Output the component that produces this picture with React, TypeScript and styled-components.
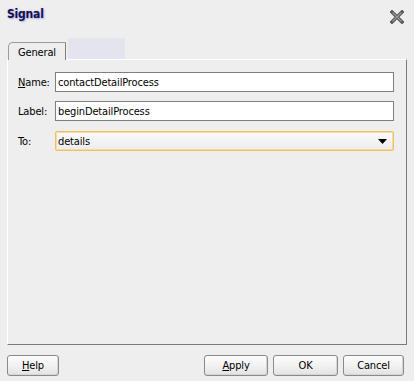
import * as React from "react";
import styled, { createGlobalStyle } from "styled-components";

const Global = createGlobalStyle`
  html, body { margin: 0; padding: 0; background: #eeeeee; }
  body {
    font-family: "DejaVu Sans Condensed", "DejaVu Sans", sans-serif;
    font-size: 11px;
    letter-spacing: -0.15px;
    color: #000;
  }
`;

const Dialog = styled.div`
  width: 414px;
  height: 381px;
  background: #eeeeee;
  display: flex;
  flex-direction: column;
`;

const Header = styled.div`
  height: 38px;
  display: flex;
  align-items: flex-start;
  justify-content: space-between;
  padding: 7px 10px 0 7px;
  box-sizing: border-box;
`;

const Title = styled.div`
  font-weight: bold;
  font-size: 12px;
  letter-spacing: -0.2px;
  color: #10104a;
  text-shadow: 1px 1px 2px #b8b0e8, 0 0 2px #c8c0f0;
`;

const CloseIcon = styled.svg`
  margin-top: 3px;
`;

const TabStrip = styled.div`
  display: flex;
  align-items: flex-end;
  height: 21px;
  padding-left: 8px;
`;

const Tab = styled.div`
  width: 58px;
  height: 18px;
  box-sizing: border-box;
  border-top: 1px solid #9a9a9a;
  border-left: 1px solid #9a9a9a;
  border-right: 1px solid #808080;
  border-top-left-radius: 5px;
  background: #eeeeee;
  display: flex;
  align-items: center;
  justify-content: center;
  padding-top: 1px;
  position: relative;
  top: 1px;
  z-index: 1;
`;

const TabFiller = styled.div`
  width: 57px;
  height: 21px;
  margin-left: 2px;
  background: #e4e4ee;
`;

const Panel = styled.div`
  margin: 0 7px;
  height: 286px;
  box-sizing: border-box;
  border-top: 1px solid #ffffff;
  border-left: 1px solid #ffffff;
  border-right: 1px solid #7a7a7a;
  border-bottom: 1px solid #7a7a7a;
  padding: 12px 12px 0 10px;
  display: flex;
  flex-direction: column;
  gap: 9px;
`;

const Row = styled.div`
  display: flex;
  align-items: center;
  height: 20px;
  &:nth-child(3) { margin-top: 1px; }
`;

const Label = styled.label`
  width: 37px;
  flex: none;
  u { text-decoration: underline; }
`;

const Field = styled.div`
  flex: 1;
  height: 20px;
  box-sizing: border-box;
  border: 1px solid #7f7f7f;
  background: #ffffff;
  display: flex;
  align-items: center;
  padding-left: 2px;
`;

const Select = styled(Field)`
  border: 1px solid #f0c060;
  box-shadow: inset 0 0 0 1px #f8dc9c;
  background: linear-gradient(#fbfbfb, #ecebef);
  border-radius: 2px;
  justify-content: space-between;
  padding-right: 6px;
`;

const Footer = styled.div`
  display: flex;
  align-items: center;
  padding: 10px 10px 0 7px;
  gap: 5px;
`;

const Spacer = styled.div`
  flex: 1;
`;

const Button = styled.button<{ $w: number }>`
  width: ${(p) => p.$w}px;
  height: 21px;
  box-sizing: border-box;
  border: 1px solid #8a8a8a;
  border-radius: 3px;
  background: linear-gradient(#fcfcfc, #f2f2f2 50%, #e2e2e2);
  box-shadow: inset -1px -1px 0 #d6d6d6;
  font-family: inherit;
  font-size: 11px;
  letter-spacing: inherit;
  color: #000;
  padding: 0;
  u { text-decoration: underline; }
`;

export default function App() {
  return (
    <Dialog>
      <Global />
      <Header>
        <Title>Signal</Title>
        <CloseIcon width="14" height="14" viewBox="0 0 14 14">
          <path
            d="M2 2 L12 12 M12 2 L2 12"
            stroke="#555"
            strokeWidth="3.4"
            strokeLinecap="square"
          />
          <path
            d="M2.5 2.5 L11.5 11.5 M11.5 2.5 L2.5 11.5"
            stroke="#9a9a9a"
            strokeWidth="1.2"
          />
        </CloseIcon>
      </Header>
      <TabStrip>
        <Tab>General</Tab>
        <TabFiller />
      </TabStrip>
      <Panel>
        <Row>
          <Label>
            <u>N</u>ame:
          </Label>
          <Field>contactDetailProcess</Field>
        </Row>
        <Row>
          <Label>Label:</Label>
          <Field>beginDetailProcess</Field>
        </Row>
        <Row>
          <Label>To:</Label>
          <Select>
            <span>details</span>
            <svg width="9" height="5" viewBox="0 0 9 5">
              <path d="M0 0 H9 L4.5 5 Z" fill="#000" />
            </svg>
          </Select>
        </Row>
      </Panel>
      <Footer>
        <Button $w={52}>
          <u>H</u>elp
        </Button>
        <Spacer />
        <Button $w={64}>
          <u>A</u>pply
        </Button>
        <Button $w={65}>OK</Button>
        <Button $w={61}>Cancel</Button>
      </Footer>
    </Dialog>
  );
}
